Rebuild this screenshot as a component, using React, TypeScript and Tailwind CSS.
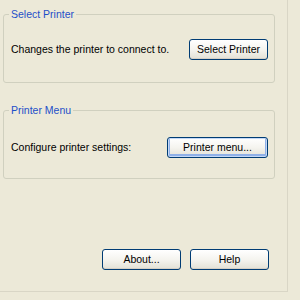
import React from 'react';

const XpButton: React.FC<{ label: string; width: string; isDefault?: boolean }> = ({ label, width, isDefault }) => (
  <button
    type="button"
    className={`${width} h-[21px] shrink-0 rounded-[3px] border border-[#003C74] bg-gradient-to-b from-[#FFFFFF] via-[#F5F4EF] to-[#E3E1D6] text-[10.5px] leading-none text-black ${
      isDefault ? 'shadow-[inset_0_0_0_1px_#C4D8F6,inset_0_-1px_0_2px_#8FB0E8]' : 'shadow-[inset_0_-1px_0_#D6D0C5]'
    }`}
  >
    {label}
  </button>
);

const GroupBox: React.FC<{ title: string; children: React.ReactNode; className?: string; padTop: string }> = ({ title, children, className, padTop }) => (
  <div className={`relative ml-[3px] w-[272px] h-[69px] rounded-[3px] border border-[#D0D0BF] ${className ?? ''}`}>
    <span className="absolute left-[5px] -top-[7px] px-[2px] bg-[#ECE9D8] text-[#1E4FC8] leading-[13px]">{title}</span>
    <div className={`flex items-center justify-between pl-[7px] pr-[6px] ${padTop}`}>{children}</div>
  </div>
);

export default function App() {
  return (
    <div className="w-[300px] h-[300px] bg-[#ECE9D8] text-[10.5px] text-black [font-family:'Liberation_Sans',Arial,sans-serif]">
      <div className="w-[288px] h-[292px] border-r border-b border-[#D9D6C6] flex flex-col">
        <GroupBox title="Select Printer" className="mt-[14px]" padTop="pt-[24px]">
          <span>Changes the printer to connect to.</span>
          <XpButton label="Select Printer" width="w-[79px]" />
        </GroupBox>

        <GroupBox title="Printer Menu" className="mt-[27px]" padTop="pt-[26px]">
          <span>Configure printer settings:</span>
          <XpButton label="Printer menu..." width="w-[101px]" isDefault />
        </GroupBox>

        <div className="mt-[70px] w-[275px] flex justify-end gap-[9px] pr-[6px]">
          <XpButton label="About..." width="w-[79px]" />
          <XpButton label="Help" width="w-[79px]" />
        </div>
      </div>
    </div>
  );
}
